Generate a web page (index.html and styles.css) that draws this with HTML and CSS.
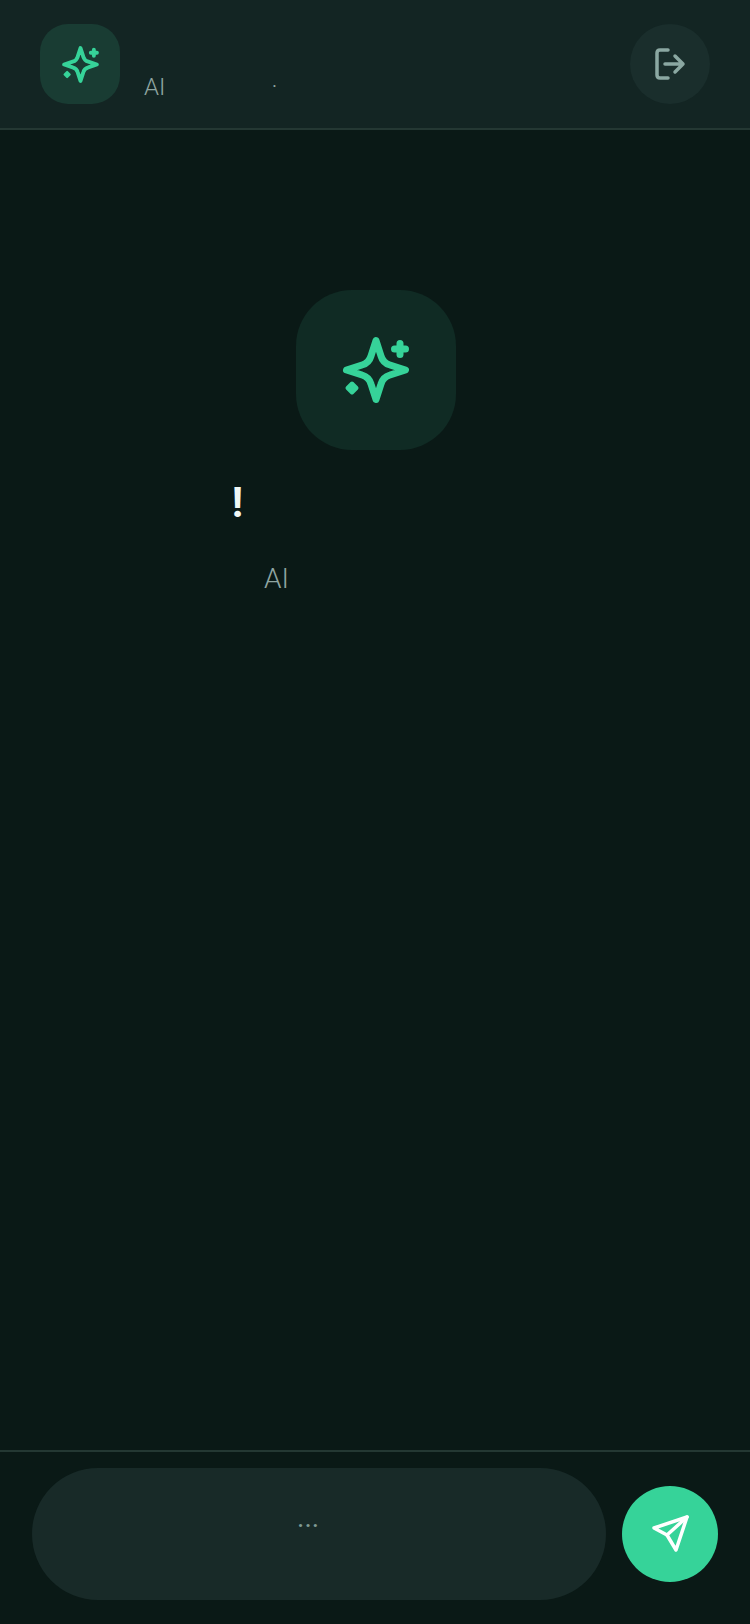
FILE: index.html
```html
<!DOCTYPE html>
<html>
    <head>
        <meta name="viewport" content="width=device-width, initial-scale=1" />
        <title>AI</title>
        <link rel="stylesheet" href="styles.css">
    </head>
    <body>
        <svg class="defs" width="0" height="0">
            <symbol id="sparkle" viewBox="36 36 88 88">
                <path d="M80 50.500L85 66Q87 73 94 75L109.500 80L94 85Q87 87 85 94L80 109.500L75 94Q73 87 66 85L50.500 80L66 75Q73 73 75 66Z" />
                <path d="M98.500 59H109.500M104 53.500V64.500" />
                <path class="dot" d="M56 93.500L60.500 98L56 102.500L51.500 98Z" />
            </symbol>
        </svg>
        <header id="topbar">
            <div class="logo">
                <svg class="logo-icon"><use href="#sparkle" /></svg>
            </div>
            <div class="brand">
                <span class="brand-sub">AI<span class="gap-a"></span>·</span>
            </div>
            <button class="logout">
                <svg viewBox="0 0 80 80" width="80" height="80">
                    <path d="M38 26H30Q27 26 27 29V51Q27 54 30 54H38" />
                    <path d="M35 40H53M45 32L53 40L45 48" />
                </svg>
            </button>
        </header>
        <main id="content">
            <div class="hero">
                <svg class="hero-icon"><use href="#sparkle" /></svg>
            </div>
            <h1 class="greet">!<span class="gap-b"></span></h1>
            <p class="intro">AI<span class="gap-c"></span></p>
        </main>
        <footer id="composer">
            <div class="input"><span class="gap-d"></span>...</div>
            <button class="send">
                <svg viewBox="0 0 96 96" width="96" height="96">
                    <path d="M65 31L32 42L45 49L54 64Z" />
                    <path d="M45 49L65 31" />
                </svg>
            </button>
        </footer>
    </body>
</html>
```

FILE: styles.css
```css
* {
    box-sizing: border-box;
}
body {
    background-color: #0a1916;
    display: flex;
    flex-direction: column;
    font-family: Roboto, "Noto Sans CJK SC", sans-serif;
    height: 1624px;
    margin: 0;
    overflow: hidden;
}
button {
    border: 0;
    padding: 0;
}
.defs {
    position: absolute;
}
symbol path {
    fill: none;
    stroke: #36d399;
    stroke-linecap: round;
    stroke-linejoin: round;
    stroke-width: 7;
}
symbol .dot {
    fill: #36d399;
    stroke-width: 4;
}

/* Top bar */
#topbar {
    align-items: center;
    background-color: #132523;
    border-bottom: 2px solid #243833;
    display: flex;
    flex: none;
    height: 130px;
    padding: 0 40px;
}
.logo {
    align-items: center;
    background-color: #193c33;
    border-radius: 28px;
    display: flex;
    height: 80px;
    justify-content: center;
    width: 80px;
}
.logo-icon {
    height: 49px;
    width: 49px;
}
.brand {
    align-self: flex-end;
    flex: 1;
    padding: 0 0 25px 24px;
}
.brand-sub {
    color: #8fa5a1;
    font-size: 24px;
    font-weight: 300;
    line-height: 32px;
}
.gap-a {
    display: inline-block;
    width: 106px;
}
.logout {
    background-color: #1a2e2c;
    border-radius: 50%;
    height: 80px;
    width: 80px;
}
.logout path {
    fill: none;
    stroke: #8ba8a2;
    stroke-linecap: round;
    stroke-linejoin: round;
    stroke-width: 3.5;
}

/* Greeting */
#content {
    align-items: center;
    display: flex;
    flex: 1;
    flex-direction: column;
    padding-top: 160px;
}
.hero {
    align-items: center;
    background-color: #102b24;
    border-radius: 56px;
    display: flex;
    flex: none;
    height: 160px;
    justify-content: center;
    margin-left: 2px;
    width: 160px;
}
.hero-icon {
    height: 88px;
    width: 88px;
}
.greet {
    color: #f0f7f5;
    font-size: 42px;
    font-weight: 700;
    line-height: 56px;
    margin: 25px 0 0;
}
.gap-b {
    display: inline-block;
    width: 275px;
}
.intro {
    color: #8fa5a1;
    font-size: 28px;
    font-weight: 300;
    line-height: 40px;
    margin: 28px 0 0;
}
.gap-c {
    display: inline-block;
    width: 197px;
}

/* Message box */
#composer {
    align-items: center;
    border-top: 2px solid #243833;
    display: flex;
    flex: none;
    gap: 16px;
    height: 174px;
    padding: 16px 32px 24px;
}
.input {
    background-color: #182a28;
    border-radius: 66px;
    color: #7f9a95;
    flex: 1;
    font-size: 28px;
    height: 132px;
    line-height: 40px;
    padding-top: 30px;
}
.gap-d {
    display: inline-block;
    width: 265px;
}
.send {
    background-color: #36d399;
    border-radius: 50%;
    flex: none;
    height: 96px;
    width: 96px;
}
.send path {
    fill: none;
    stroke: #fff;
    stroke-linecap: round;
    stroke-linejoin: round;
    stroke-width: 3.5;
}
```
